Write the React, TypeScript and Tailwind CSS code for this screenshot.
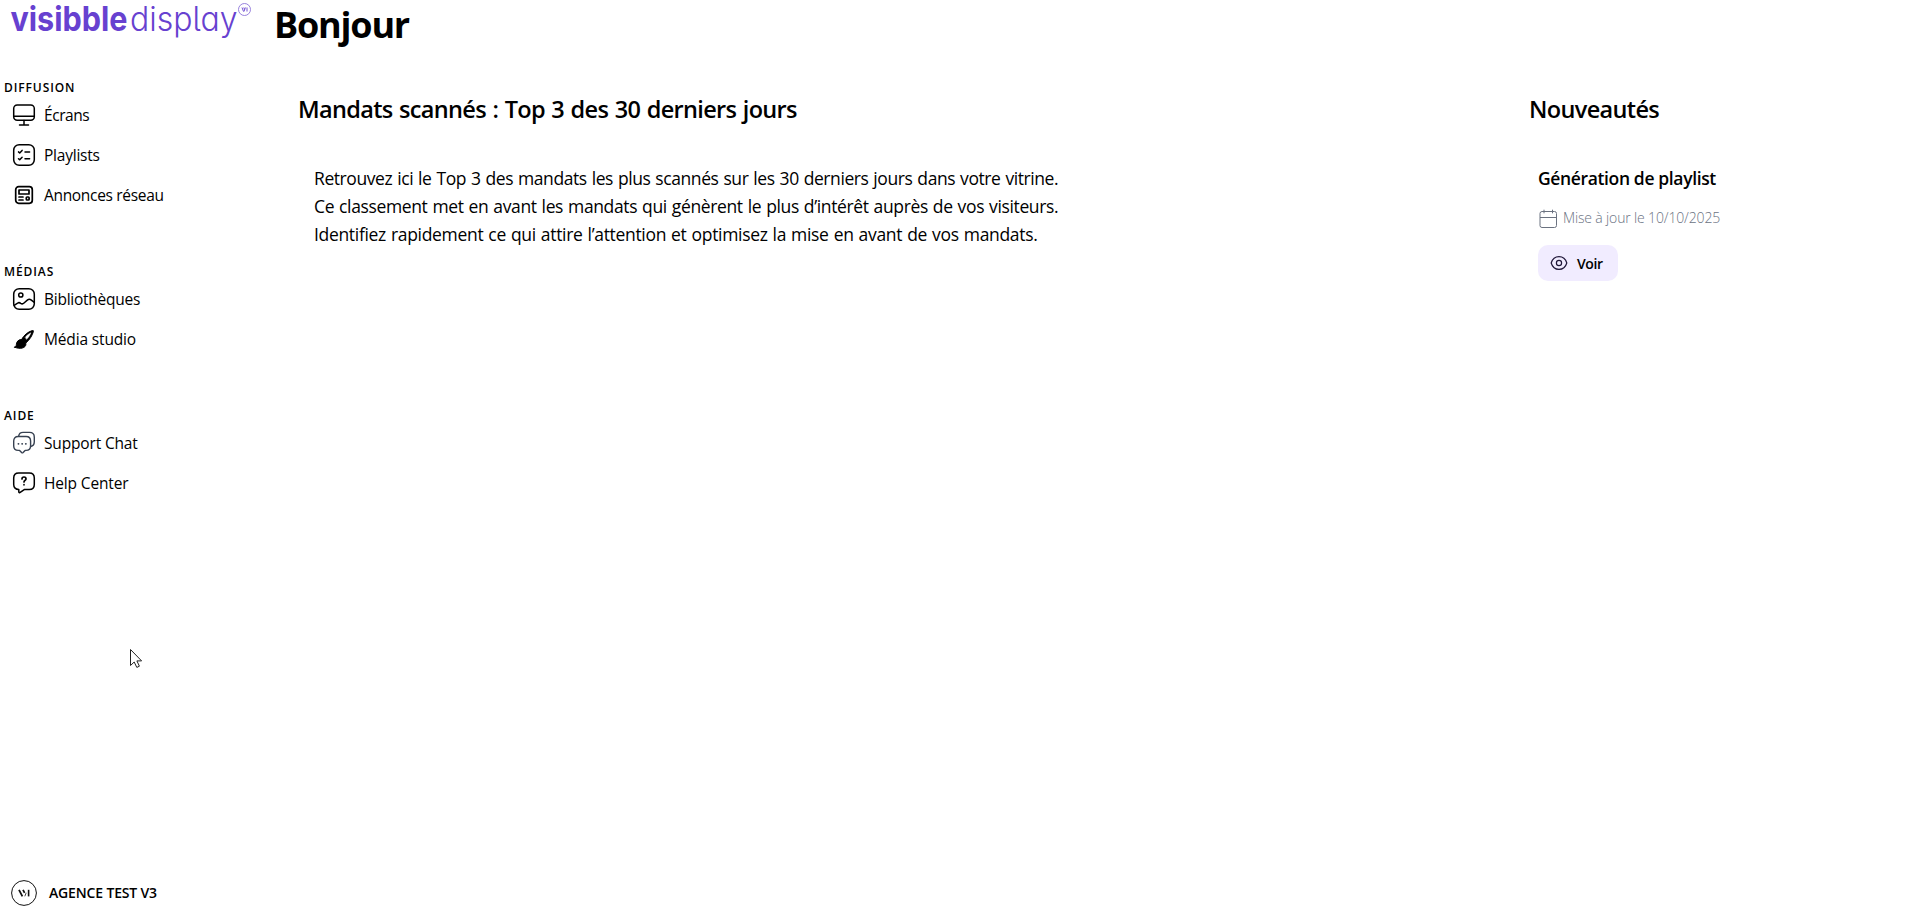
import type { ReactNode } from "react";

const iconProps = {
  width: 24,
  height: 24,
  viewBox: "0 0 24 24",
  fill: "none",
  stroke: "currentColor",
  strokeWidth: 1.5,
  strokeLinecap: "round" as const,
  strokeLinejoin: "round" as const,
};

const Logo = () => (
  <svg width="256" height="44" viewBox="0 0 256 44" fill="none">
    <g fontFamily="Inter, sans-serif" fontSize="33.5" fill="#6741d0">
      <text x="10.5" y="31" fontWeight="700" textLength="117" lengthAdjust="spacingAndGlyphs">visibble</text>
      <text
        x="130"
        y="31"
        fontWeight="350"
        textLength="107.5"
        lengthAdjust="spacingAndGlyphs"
        className="[font-feature-settings:'cv11','cv05']"
      >
        display
      </text>
    </g>
    <circle cx="244.5" cy="9.5" r="6" stroke="#8c74d8" strokeWidth="0.9" />
    <path d="M242 7.5l1.5 4M243.8 7.5l.7 2M244 11.5l1.4-4M247 7.5v4" stroke="#6741d0" strokeWidth="0.9" />
  </svg>
);

const ScreenIcon = () => (
  <svg {...iconProps}>
    <rect x="1.7" y="2" width="20.6" height="15.2" rx="3.5" />
    <path d="M2 13.2h20M12 17.5v4.4M7.5 22h9" />
  </svg>
);

const PlaylistIcon = () => (
  <svg {...iconProps}>
    <rect x="1.7" y="1.7" width="20.6" height="20.6" rx="5.5" />
    <path d="M6.5 8.9l1.2 1.1 2.4-2.6M13 9h4.6M6.5 15.7l1.2 1.1 2.4-2.6M13 15.8h4.6" />
  </svg>
);

const NewsIcon = () => (
  <svg {...iconProps} strokeWidth={1.7}>
    <rect x="3.7" y="3.7" width="16.6" height="16.6" rx="3" />
    <path d="M7 7h10v4H7zM7 14h4M7 17h4" />
    <rect x="14.3" y="14" width="2.8" height="3" rx="0.8" />
  </svg>
);

const GalleryIcon = () => (
  <svg {...iconProps}>
    <rect x="1.7" y="1.7" width="20.6" height="20.6" rx="5.5" />
    <circle cx="8.8" cy="8" r="2.1" />
    <path d="M2.2 18.3l3.4-2.2c1-.7 2.2-.5 3.1.2 1.1.8 2.3.7 3.3-.3l3.6-3.1c1-.8 2.4-.8 3.4 0l3 2.3" />
  </svg>
);

const BrushIcon = () => (
  <svg {...iconProps} strokeWidth={1}>
    <path
      d="M2.6 20.2c1.5-.6 1.7-1.5 1.8-3 .2-2.6 2.1-4.6 4.7-4.6 3 0 4.8 2 4.8 4.5 0 3.8-5.300 5.600-11.300 3.100z"
      fill="currentColor"
    />
    <path
      d="M9.7 12.300c2.200-4 6.300-7.700 10.800-8.800.8-.2 1.100.3.900 1-1.200 4.300-3.600 8-7.300 11.300z"
      fill="currentColor"
    />
    <path d="M13.300 10.300c1.500-2 3.200-3.400 5.600-4.500-1 2.600-2.200 4.600-4.200 6.400z" fill="white" stroke="white" strokeWidth="0.4" />
  </svg>
);

const ChatIcon = () => (
  <svg {...iconProps} strokeWidth={1.4} stroke="#374151">
    <path d="M6.7 5.1C7 2.7 8.6 1.4 11 1.4h6.5c3 0 4.8 1.8 4.8 4.8v4.6c0 2.8-1.3 4.3-3.7 4.7" />
    <path d="M6.2 5.5h7.9c3 0 4.5 1.6 4.5 4.5v5c0 3-1.6 4.4-4.5 4.4h-1l-2 2.1c-.5.5-1 .5-1.5 0l-2-2.1H6.2c-3 0-4.5-1.7-4.5-4.4v-5c0-3 1.6-4.5 4.5-4.5z" />
    <path d="M6.4 12.8h.1M10.1 12.8h.1M13.8 12.8h.1" strokeWidth="1.8" />
  </svg>
);

const HelpIcon = () => (
  <svg {...iconProps}>
    <path d="M6.7 2h10.6c3.2 0 5 1.8 5 5v6.4c0 3.2-1.8 5-5 5h-4.7l-4.4 3c-.7.5-1.4.1-1.4-.7v-2.3c-3.2 0-5.1-1.8-5.1-5V7c0-3.2 1.8-5 5-5z" />
    <path d="M10 8c0-1.2.8-2 2-2s2 .8 2 1.9c0 1.4-2 1.6-2 3.1M12 13.7v.1" strokeWidth="1.7" />
  </svg>
);

const CalendarIcon = () => (
  <svg width="20" height="20" viewBox="0 0 20 20" fill="none" stroke="#6b7280" strokeWidth="1">
    <rect x="2" y="2.5" width="16.5" height="16" rx="2" />
    <path d="M2 8.5h16.5M6 .7v3.6M14.5.7v3.6" />
  </svg>
);

const EyeIcon = () => (
  <svg width="18" height="18" viewBox="0 0 18 18" fill="none" stroke="#1f1638" strokeWidth="1.2">
    <path d="M1.2 9C2.4 5 5.2 2.6 9 2.6S15.6 5 16.8 9c-1.2 4-4 6.4-7.8 6.4S2.4 13 1.2 9z" />
    <circle cx="9" cy="9" r="2.6" />
  </svg>
);

const AgencyIcon = () => (
  <svg width="26" height="26" viewBox="0 0 26 26" fill="none" stroke="#111">
    <circle cx="13" cy="13" r="12.4" strokeWidth="1" />
    <path d="M8 9.8l3.4 6.5M12 9.8l1.6 3" strokeWidth="1.8" />
    <path d="M13.8 16.3l1.4-3.5" strokeWidth="0.8" />
    <path d="M17.6 9.8v6.6" strokeWidth="1.6" />
  </svg>
);

type NavItem = { label: string; icon: ReactNode; spacing: string };

const sections: { title: string; items: NavItem[] }[] = [
  {
    title: "DIFFUSION",
    items: [
      { label: "Écrans", icon: <ScreenIcon />, spacing: "tracking-[-0.45px]" },
      { label: "Playlists", icon: <PlaylistIcon />, spacing: "tracking-[-0.22px]" },
      { label: "Annonces réseau", icon: <NewsIcon />, spacing: "tracking-[-0.32px]" },
    ],
  },
  {
    title: "MÉDIAS",
    items: [
      { label: "Bibliothèques", icon: <GalleryIcon />, spacing: "tracking-[-0.25px]" },
      { label: "Média studio", icon: <BrushIcon />, spacing: "tracking-[-0.15px]" },
    ],
  },
  {
    title: "AIDE",
    items: [
      { label: "Support Chat", icon: <ChatIcon />, spacing: "tracking-[-0.16px]" },
      { label: "Help Center", icon: <HelpIcon />, spacing: "tracking-[-0.15px]" },
    ],
  },
];

const Sidebar = () => (
  <aside className="flex flex-col w-[274px] shrink-0">
    <Logo />
    <nav className="flex flex-col gap-[49px] pt-[36px]">
      {sections.map((section) => (
        <div key={section.title}>
          <h2 className="pl-1 text-[12px] leading-[15px] font-semibold tracking-[0.9px]">{section.title}</h2>
          <ul>
            {section.items.map((item) => (
              <li key={item.label} className="flex items-center h-10 pl-3 gap-2">
                {item.icon}
                <span className={`text-[15.5px] leading-6 ${item.spacing}`}>{item.label}</span>
              </li>
            ))}
          </ul>
        </div>
      ))}
    </nav>
    <div className="mt-auto mb-[12px] flex items-center gap-3 pl-[11px]">
      <AgencyIcon />
      <span className="text-[14px] leading-5 font-semibold tracking-[-0.16px]">AGENCE TEST V3</span>
    </div>
  </aside>
);

const TopMandates = () => (
  <section className="w-[1233px] shrink-0 pl-6">
    <h2 className="text-[23.5px] leading-8 font-semibold tracking-[-0.66px] [word-spacing:1px]">
      Mandats scannés : Top 3 des 30 derniers jours
    </h2>
    <div className="pl-4 pt-[39px] text-[17.5px] leading-7 [word-spacing:0.8px]">
      <p className="tracking-[-0.42px]">
        Retrouvez ici le Top 3 des mandats les plus scannés sur les 30 derniers jours dans votre vitrine.
      </p>
      <p className="tracking-[-0.37px]">
        Ce classement met en avant les mandats qui génèrent le plus d’intérêt auprès de vos visiteurs.
      </p>
      <p className="tracking-[-0.32px]">
        Identifiez rapidement ce qui attire l’attention et optimisez la mise en avant de vos mandats.
      </p>
    </div>
  </section>
);

const News = () => (
  <section className="pl-[22px]">
    <h2 className="text-[23.5px] leading-8 font-semibold tracking-[-0.65px]">Nouveautés</h2>
    <div className="pl-[9px] pt-[39px]">
      <h3 className="text-[17.5px] leading-7 font-semibold tracking-[-0.36px]">Génération de playlist</h3>
      <div className="flex items-center gap-[5px] mt-[17px] h-5">
        <CalendarIcon />
        <span className="-mt-[2px] text-[14px] leading-5 font-light text-gray-500 tracking-[-0.15px]">
          Mise à jour le 10/10/2025
        </span>
      </div>
      <button
        type="button"
        className="mt-[16px] flex items-center gap-[9px] w-20 h-9 pl-3 rounded-[10px] bg-[#f1ecff] text-[14px] font-semibold tracking-[-0.4px]"
      >
        <EyeIcon /> Voir
      </button>
    </div>
  </section>
);

const App = () => {
  return (
    <div className="flex h-screen overflow-hidden bg-white text-black font-['Open_Sans','Noto_Sans',sans-serif]">
      <Sidebar />
      <main className="flex-1">
        <h1 className="text-[36px] leading-[50px] font-bold tracking-[-1.2px]">Bonjour</h1>
        <div className="flex pt-[43px]">
          <TopMandates />
          <News />
        </div>
      </main>
      {/* mouse pointer resting over the page */}
      <svg className="absolute left-[129px] top-[648px]" width="15" height="22" viewBox="0 0 15 22">
        <path
          d="M1.5 1.5v16l3.7-3.5 2.6 5.4 2.6-1.2-2.5-5.3h4.7z"
          fill="white"
          stroke="#222"
          strokeWidth="1"
        />
      </svg>
    </div>
  );
};

export default App;
